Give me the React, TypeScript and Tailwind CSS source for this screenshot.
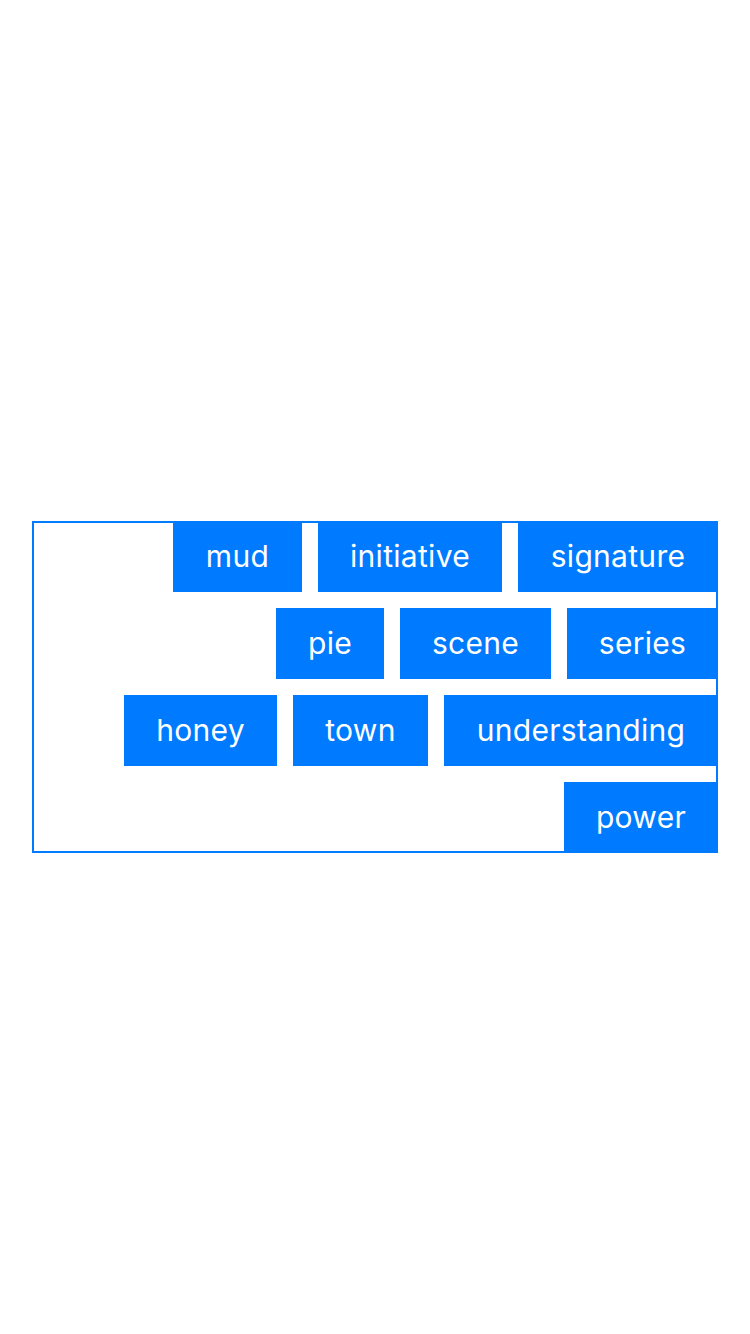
import React from "react";

const rows: { label: string; w: string }[][] = [
  [
    { label: "mud", w: "w-[129px]" },
    { label: "initiative", w: "w-[184px]" },
    { label: "signature", w: "w-[200px]" },
  ],
  [
    { label: "pie", w: "w-[108px]" },
    { label: "scene", w: "w-[151px]" },
    { label: "series", w: "w-[151px]" },
  ],
  [
    { label: "honey", w: "w-[153px]" },
    { label: "town", w: "w-[135px]" },
    { label: "understanding", w: "w-[274px]" },
  ],
  [{ label: "power", w: "w-[154px]" }],
];

export default function App() {
  return (
    <div
      className="w-[750px] h-[1334px] bg-white pt-[521px] pl-[32px]"
      style={{ fontFamily: "Inter, 'Noto Sans', sans-serif" }}
    >
      <div className="w-[686px] h-[332px] flex flex-col justify-between shadow-[inset_0_0_0_2px_#007AFF]">
        {rows.map((row, i) => (
          <div key={i} className="flex justify-end gap-4">
            {row.map((t) => (
              <div
                key={t.label}
                className={`${t.w} h-[70.67px] bg-[#007AFF] text-white text-[30px] tracking-[0.3px] flex items-center justify-center`}
              >
                {t.label}
              </div>
            ))}
          </div>
        ))}
      </div>
    </div>
  );
}
